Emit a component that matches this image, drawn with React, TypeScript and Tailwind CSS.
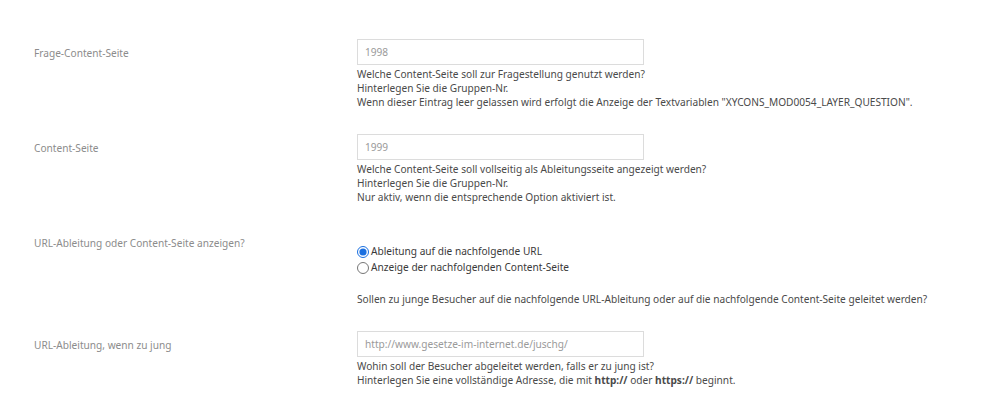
import React from 'react';

const Label: React.FC<{ text: string }> = ({ text }) => (
    <div className="pt-[7px] text-[10.15px] leading-[14px] text-[#8c8c8c]">{text}</div>
);

const TextInput: React.FC<{ value: string }> = ({ value }) => (
    <input
        type="text"
        defaultValue={value}
        className="block w-[287px] h-[26px] border border-[#dcdcdc] bg-white px-[7px] text-[10.15px] text-[#9a9a9a] outline-none"
    />
);

const Help: React.FC<{ children: React.ReactNode }> = ({ children }) => (
    <div className="mt-[2px] text-[10.15px] leading-[14px] text-[#4a4a4a]">{children}</div>
);

const App: React.FC = () => {
    return (
        <div className="w-[1000px] h-[412px] bg-white pl-[34px] pt-[39px] font-['Noto_Sans',sans-serif]">
            <div className="grid grid-cols-[323px_1fr] gap-y-[25px]">
                <Label text="Frage-Content-Seite" />
                <div>
                    <TextInput value="1998" />
                    <Help>
                        <p>Welche Content-Seite soll zur Fragestellung genutzt werden?</p>
                        <p>Hinterlegen Sie die Gruppen-Nr.</p>
                        <p>Wenn dieser Eintrag leer gelassen wird erfolgt die Anzeige der Textvariablen "XYCONS_MOD0054_LAYER_QUESTION".</p>
                    </Help>
                </div>

                <Label text="Content-Seite" />
                <div>
                    <TextInput value="1999" />
                    <Help>
                        <p>Welche Content-Seite soll vollseitig als Ableitungsseite angezeigt werden?</p>
                        <p>Hinterlegen Sie die Gruppen-Nr.</p>
                        <p>Nur aktiv, wenn die entsprechende Option aktiviert ist.</p>
                    </Help>
                </div>

                <Label text="URL-Ableitung oder Content-Seite anzeigen?" />
                <div className="pt-[15px]">
                    <label className="flex items-center h-[16px] text-[10.15px] text-[#3a3a3a]">
                        <input type="radio" name="mode" defaultChecked className="m-0 mr-[2px] w-[12px] h-[12px] accent-[#1a6fe0]" />
                        Ableitung auf die nachfolgende URL
                    </label>
                    <label className="flex items-center h-[16px] text-[10.15px] text-[#3a3a3a]">
                        <input type="radio" name="mode" className="m-0 mr-[2px] w-[12px] h-[12px]" />
                        Anzeige der nachfolgenden Content-Seite
                    </label>
                    <p className="mt-[16px] text-[10.15px] leading-[14px] text-[#4a4a4a]">
                        Sollen zu junge Besucher auf die nachfolgende URL-Ableitung oder auf die nachfolgende Content-Seite geleitet werden?
                    </p>
                </div>

                <Label text="URL-Ableitung, wenn zu jung" />
                <div>
                    <TextInput value="http://www.gesetze-im-internet.de/juschg/" />
                    <Help>
                        <p>Wohin soll der Besucher abgeleitet werden, falls er zu jung ist?</p>
                        <p>
                            Hinterlegen Sie eine vollständige Adresse, die mit <b>http://</b> oder <b>https://</b> beginnt.
                        </p>
                    </Help>
                </div>
            </div>
        </div>
    );
};

export default App;
